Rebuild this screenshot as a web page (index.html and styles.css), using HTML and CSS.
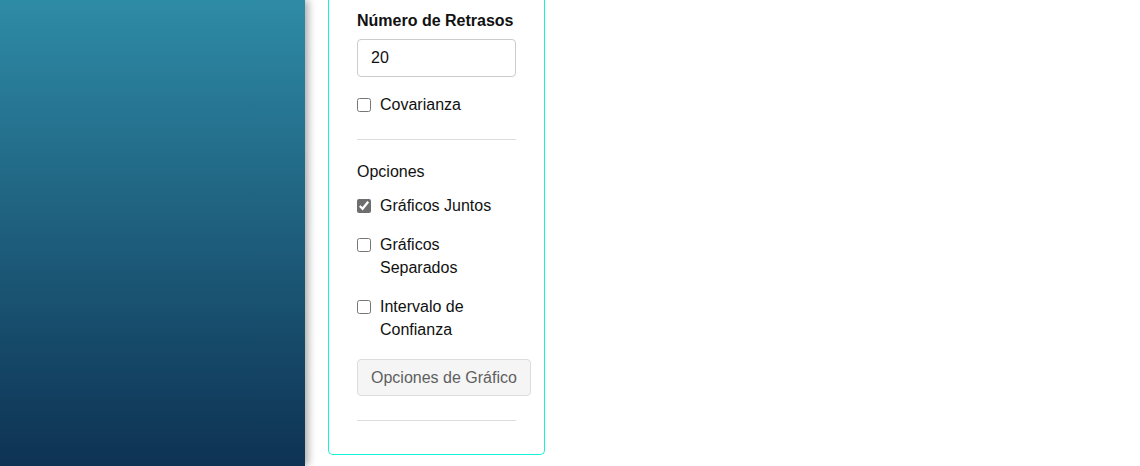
FILE: index.html
```html
<!DOCTYPE html>
<html lang="es">
<head>
<meta charset="utf-8">
<title>Opciones</title>
<link rel="stylesheet" href="styles.css">
</head>
<body>
<div class="layout">
  <aside class="sidebar"></aside>
  <main class="main">
    <section class="card">
      <label class="field-label" for="lags">Número de Retrasos</label>
      <input id="lags" class="text-input" type="text" value="20">
      <label class="check"><input type="checkbox"><span>Covarianza</span></label>
      <hr class="divider">
      <div class="group-title">Opciones</div>
      <label class="check check-first"><input type="checkbox" checked><span>Gráficos Juntos</span></label>
      <label class="check check-wrap"><input type="checkbox"><span>Gráficos Separados</span></label>
      <label class="check check-wrap"><input type="checkbox"><span>Intervalo de Confianza</span></label>
      <button class="btn" type="button">Opciones de Gráfico</button>
      <hr class="divider divider-bottom">
    </section>
  </main>
</div>
</body>
</html>
```

FILE: styles.css
```css
* { box-sizing: border-box; }
html, body {
  margin: 0;
  padding: 0;
  background: #ffffff;
  font-family: "Liberation Sans", Arial, sans-serif;
  font-size: 16px;
  line-height: 23px;
  color: #111;
}
.layout {
  display: flex;
  height: 466px;
  overflow: hidden;
}
.sidebar {
  width: 305px;
  flex: 0 0 305px;
  height: 466px;
  background: linear-gradient(to bottom, #2e8ba6 0%, #0e3253 100%);
  box-shadow: 3px 0 8px rgba(0, 0, 0, 0.35);
  position: relative;
  z-index: 1;
}
.main {
  padding-left: 23px;
}
.card {
  width: 217px;
  border: 1px solid #12f2d8;
  border-top: 0;
  border-radius: 0 0 5px 5px;
  padding: 9px 28px 0 28px;
  display: flex;
  flex-direction: column;
  align-items: flex-start;
}
.field-label {
  font-weight: bold;
  display: block;
  margin-bottom: 7px;
}
.text-input {
  width: 159px;
  height: 38px;
  border: 1px solid #cccccc;
  border-radius: 4px;
  padding: 0 13px;
  font-family: inherit;
  font-size: 16px;
  color: #111;
  margin: 0 0 16px 0;
}
.check {
  display: flex;
  align-items: flex-start;
  width: 159px;
}
.check input {
  margin: 5px 9px 0 0;
  width: 14px;
  height: 14px;
  flex: 0 0 14px;
  accent-color: #6e6e6e;
}
.divider {
  width: 159px;
  border: 0;
  border-top: 1px solid #dcdcdc;
  margin: 23px 0 20px 0;
}
.group-title {
  margin-bottom: 11px;
}
.check-wrap {
  margin-top: 16px;
}
.btn {
  margin-top: 18px;
  height: 37px;
  padding: 0 13px;
  border: 1px solid #dddddd;
  border-radius: 4px;
  background: #f5f5f5;
  color: #5f5f5f;
  font-family: inherit;
  font-size: 16px;
  white-space: nowrap;
}
.divider-bottom {
  margin: 24px 0 33px 0;
}
```
